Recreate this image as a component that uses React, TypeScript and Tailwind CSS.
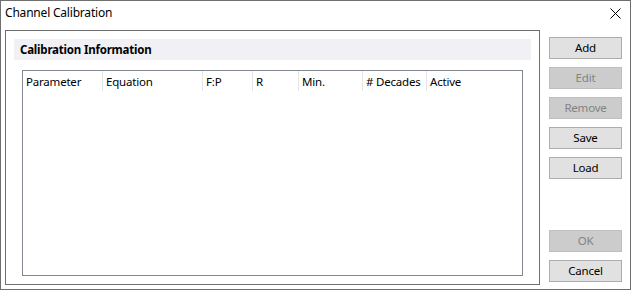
import { ReactNode } from "react";

const columns = [
  { label: "Parameter", w: "w-[80px]" },
  { label: "Equation", w: "w-[100px]" },
  { label: "F:P", w: "w-[50px]" },
  { label: "R", w: "w-[46px]" },
  { label: "Min.", w: "w-[64px]" },
  { label: "# Decades", w: "w-[64px]" },
];

const Btn = ({ children, disabled }: { children: ReactNode; disabled?: boolean }) => (
  <div
    className={
      disabled
        ? "h-[22px] flex items-center justify-center border border-[#bfbfbf] bg-[#cccccc] text-[#838383]"
        : "h-[22px] flex items-center justify-center border border-[#adadad] bg-[#e1e1e1] text-black"
    }
  >
    {children}
  </div>
);

const App = () => {
  return (
    <div
      className="w-[631px] h-[290px] border border-[#6f6f6f] bg-white flex flex-col text-[11.5px] tracking-[-0.2px] text-black"
      style={{ fontFamily: '"Noto Sans", "Segoe UI", sans-serif' }}
    >
      {/* title bar */}
      <div className="h-[29px] flex items-center justify-between pl-[4px] pr-[9px] pb-[5px]">
        <span className="leading-none text-[12px]">Channel Calibration</span>
        <svg width="11" height="11" viewBox="0 0 11 11">
          <path d="M0.5 0.5 L10.5 10.5 M10.5 0.5 L0.5 10.5" stroke="#000" strokeWidth="1" />
        </svg>
      </div>

      <div className="flex-1 flex pl-[4px] pb-[4px]">
        {/* group box */}
        <div className="w-[535px] border border-[#6f6f6f] flex flex-col pt-[8px] pb-[8px]">
          <div className="mx-[8px] h-[21px] bg-[#f0f0f5] flex items-center pl-[6px] font-bold">
            Calibration Information
          </div>
          <div className="mx-[16px] mt-[10px] flex-1 border border-[#828790] bg-white">
            <div className="h-[20px] flex">
              {columns.map((c) => (
                <div
                  key={c.label}
                  className={`${c.w} h-full border-r border-[#e5e5e5] pl-[3px] pt-[1px] flex items-center`}
                >
                  {c.label}
                </div>
              ))}
              <div className="flex-1 pl-[3px] pt-[1px] flex items-center">Active</div>
            </div>
          </div>
        </div>

        {/* buttons */}
        <div className="ml-[9px] w-[73px] flex flex-col pt-[7px] pb-[3px]">
          <div className="flex flex-col gap-[8px]">
            <Btn>Add</Btn>
            <Btn disabled>Edit</Btn>
            <Btn disabled>Remove</Btn>
            <Btn>Save</Btn>
            <Btn>Load</Btn>
          </div>
          <div className="mt-auto flex flex-col gap-[8px]">
            <Btn disabled>OK</Btn>
            <Btn>Cancel</Btn>
          </div>
        </div>
      </div>
    </div>
  );
};

export default App;
